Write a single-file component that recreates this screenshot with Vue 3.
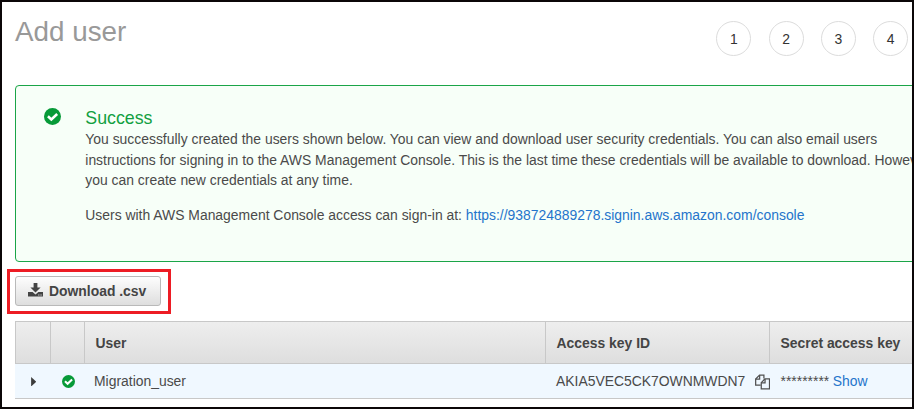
<script setup>
const steps = [1, 2, 3, 4]
const users = [{ name: 'Migration_user', key: 'AKIA5VEC5CK7OWNMWDN7', secret: '*********' }]
</script>

<template>
  <div class="page">
    <header class="header">
      <h1 class="title">Add user</h1>
      <div class="steps">
        <span v-for="s in steps" :key="s" class="step">{{ s }}</span>
      </div>
    </header>

    <section class="alert">
      <svg class="alert-icon" viewBox="0 0 16 16">
        <circle cx="8" cy="8" r="8" fill="#079a38" />
        <path d="M3.7 7.8 6.9 10.8 12.4 5.6" fill="none" stroke="#fff" stroke-width="2.4" />
      </svg>
      <div class="alert-body">
        <h2 class="alert-title">Success</h2>
        <p class="message">
          You successfully created the users shown below. You can view and download user security credentials. You can also email users<br />
          instructions for signing in to the AWS Management Console. This is the last time these credentials will be available to download. However,<br />
          you can create new credentials at any time.
        </p>
        <p class="message signin">
          Users with AWS Management Console access can sign-in at: <a class="link">https://938724889278.signin.aws.amazon.com/console</a>
        </p>
      </div>
    </section>

    <div class="highlight">
      <button class="download">
        <svg class="download-icon" viewBox="0 0 15 14">
          <path d="M5.6 0h3.8v4.6h3.2L7.5 9.6 2.4 4.6h3.2z" fill="#444" />
          <path d="M0 9h4.6l2.9 2.6L10.4 9H15v4.6H0z" fill="#444" />
          <path d="M10.3 12h1.1M12.5 12h1.1" stroke="#eee" stroke-width="1" />
        </svg>
        <span>Download .csv</span>
      </button>
    </div>

    <div class="table">
      <div class="row head">
        <div class="cell"></div>
        <div class="cell"></div>
        <div class="cell">User</div>
        <div class="cell">Access key ID</div>
        <div class="cell">Secret access key</div>
      </div>
      <div v-for="u in users" :key="u.name" class="row data">
        <div class="cell icon-cell">
          <svg class="caret" viewBox="0 0 5 9"><path d="M0 0 5 4.5 0 9z" fill="#3c3c3c" /></svg>
        </div>
        <div class="cell icon-cell">
          <svg class="ok" viewBox="0 0 16 16">
            <circle cx="8" cy="8" r="8" fill="#079a38" />
            <path d="M3.7 7.8 6.9 10.8 12.4 5.6" fill="none" stroke="#fff" stroke-width="2.6" />
          </svg>
        </div>
        <div class="cell name">{{ u.name }}</div>
        <div class="cell key">
          <span>{{ u.key }}</span>
          <svg class="copy" viewBox="0 0 16 16">
            <g fill="none" stroke="#505050" stroke-width="1.3">
              <path d="M6 11.4H.7V4.8L4.8.7H9.4V4.4" />
              <path d="M.7 4.9H4.9V.7" />
              <path d="M6.6 8.6 10.4 4.8H15.3V15.3H6.6z" />
              <path d="M6.6 8.9H10.6V4.8" />
            </g>
          </svg>
        </div>
        <div class="cell secret"><span>{{ u.secret }}</span><a class="link show">Show</a></div>
      </div>
    </div>
  </div>
</template>

<style>
body {
  margin: 0;
  background: #fff;
}
</style>

<style scoped>
.page {
  box-sizing: border-box;
  width: 914px;
  height: 409px;
  border: 2px solid #0b0708;
  overflow: hidden;
  padding-left: 13px;
  background: #fff;
  color: #4a4a4a;
  font-family: "Liberation Sans", Arial, sans-serif;
  font-size: 13.92px;
}
.header {
  display: flex;
  justify-content: space-between;
  align-items: flex-start;
  height: 83px;
  padding-right: 4px;
  box-sizing: border-box;
}
.title {
  margin: 14px 0 0;
  font-size: 27.8px;
  line-height: 32px;
  font-weight: 400;
  color: #999;
}
.steps {
  display: flex;
  gap: 17.2px;
  margin-top: 19px;
}
.step {
  box-sizing: border-box;
  width: 35px;
  height: 35px;
  border: 1px solid #dcdcdc;
  border-radius: 50%;
  text-align: center;
  line-height: 35px;
  color: #333;
}
.alert {
  box-sizing: border-box;
  display: flex;
  width: 960px;
  height: 177px;
  padding: 21px 0 0 27.5px;
  border: 1px solid #1ba548;
  border-radius: 4px;
  background: #f7fff8;
}
.alert-icon {
  flex: none;
  width: 17px;
  height: 17px;
  margin-top: 1px;
}
.alert-body {
  flex: none;
  margin-left: 24.8px;
}
.alert-title {
  margin: 0;
  font-size: 17.8px;
  line-height: 22px;
  font-weight: 400;
  color: #12a041;
}
.message {
  margin: 0;
  line-height: 20.6px;
  white-space: nowrap;
}
.signin {
  margin-top: 14px;
}
.link {
  color: #2474cb;
}
.highlight {
  box-sizing: border-box;
  width: 164px;
  height: 45px;
  margin: 7px 0 0 -8px;
  padding: 4px 5px;
  border: 3px solid #ed1c24;
}
.download {
  box-sizing: border-box;
  display: flex;
  align-items: center;
  width: 146px;
  height: 30px;
  padding: 0 0 0 12px;
  border: 1px solid #b9b9b9;
  border-radius: 3px;
  background: linear-gradient(#fdfdfd, #dedede);
  color: #444;
  font: bold 13.9px "Liberation Sans", Arial, sans-serif;
  white-space: nowrap;
}
.download-icon {
  flex: none;
  width: 15px;
  height: 14px;
  margin: 0 6px 3px 0;
}
.table {
  width: 960px;
  margin-top: 7px;
}
.row {
  box-sizing: border-box;
  display: grid;
  grid-template-columns: 36px 34px 461px 224px 1fr;
  border-bottom: 1px solid #c8c8c8;
}
.head {
  height: 43px;
  border-top: 1px solid #c8c8c8;
  border-left: 1px solid #c8c8c8;
  grid-template-columns: 35px 34px 461px 224px 1fr;
  background: linear-gradient(#eee, #dedede);
  color: #444;
  font-weight: bold;
  line-height: 42px;
}
.head .cell {
  box-sizing: border-box;
  padding-left: 10.5px;
  border-right: 1px solid #c8c8c8;
}
.data {
  height: 35px;
  background: #f0f8ff;
  line-height: 35px;
}
.icon-cell {
  display: flex;
  align-items: center;
}
.caret {
  width: 5.5px;
  height: 9.5px;
  margin-left: 15.5px;
}
.ok {
  width: 13px;
  height: 13px;
  margin-left: 11px;
}
.name {
  padding-left: 9px;
}
.key {
  display: flex;
  align-items: center;
  padding-left: 10px;
}
.copy {
  width: 16px;
  height: 16px;
  margin-left: 9.5px;
}
.secret {
  padding-left: 10.5px;
}
.show {
  margin-left: 3.5px;
}
</style>
